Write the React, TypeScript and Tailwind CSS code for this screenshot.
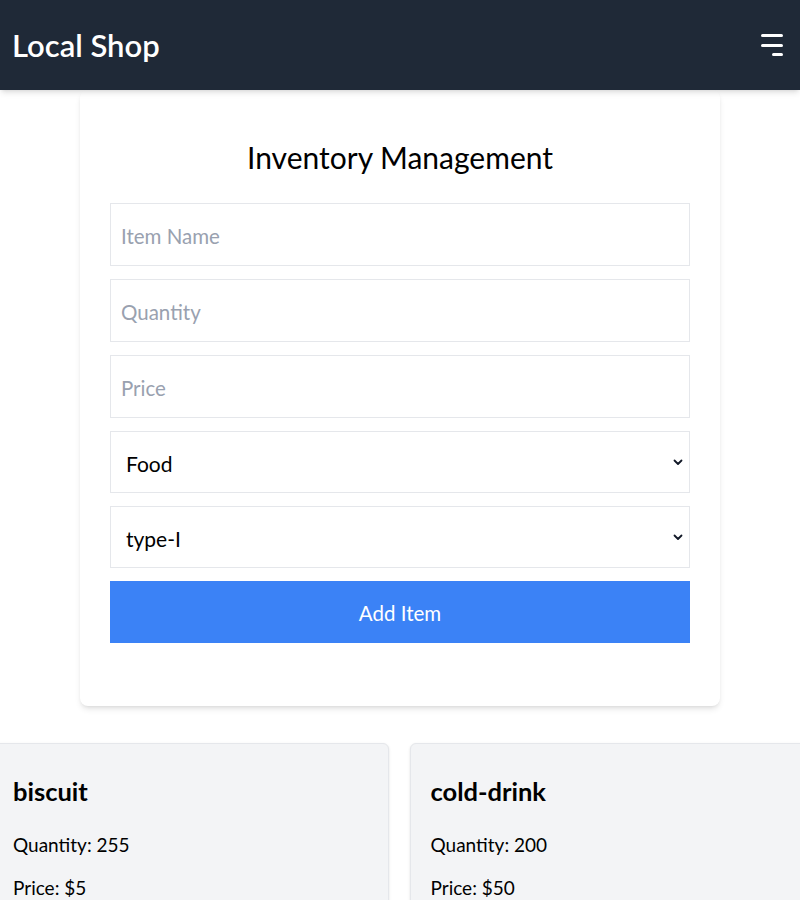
import { useState } from "react";

const items = [
  { name: "biscuit", quantity: 255, price: 5 },
  { name: "cold-drink", quantity: 200, price: 50 },
];

function Chevron() {
  return (
    <svg
      className="pointer-events-none absolute right-[6px] top-1/2 -translate-y-1/2"
      width="12"
      height="12"
      viewBox="0 0 12 12"
      fill="none"
      stroke="#111827"
      strokeWidth="1.8"
      strokeLinecap="round"
      strokeLinejoin="round"
    >
      <path d="M2.5 4.5 6 8l3.5-3.5" />
    </svg>
  );
}

export default function App() {
  const [category, setCategory] = useState("Food");
  const [type, setType] = useState("type-I");

  return (
    <div className="min-h-screen overflow-hidden bg-white font-['Lato','Liberation_Sans',sans-serif] text-black">
      <header className="relative z-10 flex h-[90px] items-center justify-between bg-[#1f2937] pl-3 pr-[17px] shadow-md">
        <span className="text-[31px] font-semibold leading-[40px] text-white">Local Shop</span>
        <button className="flex h-[22px] w-[22px] flex-col items-end justify-between">
          <span className="block h-[3px] w-[22px] rounded-sm bg-white" />
          <span className="block h-[3px] w-[22px] rounded-sm bg-white" />
          <span className="block h-[3px] w-[11px] rounded-sm bg-white" />
        </button>
      </header>

      <div className="mx-auto w-[640px] rounded-lg bg-white px-[30px] pb-[63px] pt-[47px] shadow-md">
        <h1 className="mb-[26px] text-center text-[30px] leading-[40px]">Inventory Management</h1>
        <div className="flex flex-col gap-[13px]">
          <input
            placeholder="Item Name"
            className="h-[63px] border border-gray-200 px-[10px] pt-[3px] text-[20.5px] outline-none placeholder:text-gray-400"
          />
          <input
            placeholder="Quantity"
            className="h-[63px] border border-gray-200 px-[10px] pt-[3px] text-[20.5px] outline-none placeholder:text-gray-400"
          />
          <input
            placeholder="Price"
            className="h-[63px] border border-gray-200 px-[10px] pt-[3px] text-[20.5px] outline-none placeholder:text-gray-400"
          />
          <div className="relative">
            <select
              value={category}
              onChange={(e) => setCategory(e.target.value)}
              className="h-[62px] w-full appearance-none border border-gray-200 bg-white px-[15px] pt-[3px] text-[21px] outline-none"
            >
              <option>Food</option>
              <option>Drink</option>
            </select>
            <Chevron />
          </div>
          <div className="relative">
            <select
              value={type}
              onChange={(e) => setType(e.target.value)}
              className="h-[62px] w-full appearance-none border border-gray-200 bg-white px-[15px] pt-[3px] text-[21px] outline-none"
            >
              <option>type-I</option>
              <option>type-II</option>
            </select>
            <Chevron />
          </div>
          <button className="h-[62px] bg-[#3b82f6] pt-[2px] text-[20.5px] text-white">Add Item</button>
        </div>
      </div>

      <div className="-ml-2 mt-[37px] grid w-[814px] grid-cols-2 gap-[21px]">
        {items.map((item) => (
          <div
            key={item.name}
            className="rounded-md border border-gray-200 bg-[#f3f4f6] pb-6 pl-[20px] pt-[29px] shadow-sm"
          >
            <h2 className="mb-5 text-[25.5px] font-bold leading-[36px]">{item.name}</h2>
            <p className="mb-[11px] text-[19px] leading-[32px]">Quantity: {item.quantity}</p>
            <p className="text-[19px] leading-[32px]">Price: ${item.price}</p>
          </div>
        ))}
      </div>
    </div>
  );
}
